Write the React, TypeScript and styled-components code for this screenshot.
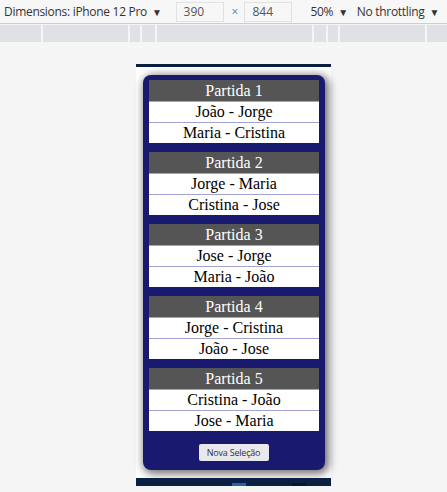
import React from "react";
import styled, { createGlobalStyle } from "styled-components";

const GlobalStyle = createGlobalStyle`
  html, body {
    margin: 0;
    padding: 0;
    background: #f4f5f4;
    width: 447px;
    height: 492px;
    overflow: hidden;
  }
`;

const Screen = styled.div`
  width: 447px;
  height: 492px;
  display: flex;
  flex-direction: column;
  background: #f4f5f4;
  font-family: "Open Sans", "Liberation Sans", sans-serif;
`;

const Toolbar = styled.div`
  height: 23px;
  display: flex;
  align-items: center;
  background: #f7f7f7;
  border-bottom: 1px solid #cbcdd1;
  font-size: 12px;
  color: #333333;
  padding-left: 4px;
`;

const ToolLabel = styled.span<{ $gap?: number }>`
  margin-left: ${(p) => p.$gap ?? 0}px;
  white-space: nowrap;
  letter-spacing: -0.3px;
`;

const Caret = styled.span`
  font-size: 10px;
  margin-left: 5px;
`;

const SizeBox = styled.div<{ $gap: number }>`
  margin-left: ${(p) => p.$gap}px;
  width: 48px;
  height: 20px;
  box-sizing: border-box;
  border: 1px solid #e2e2e2;
  background: #f7f7f7;
  display: flex;
  align-items: center;
  padding-left: 7px;
  color: #555555;
`;

const Times = styled.span`
  color: #777777;
  margin: 0 6px 0 8px;
  font-size: 12px;
`;

const Ruler = styled.div`
  height: 17px;
  margin-top: 1px;
  display: flex;
  background: #dfe1e5;
`;

const RulerSeg = styled.div<{ $w: number }>`
  width: ${(p) => p.$w}px;
  flex-shrink: 0;
  border-right: 2px solid #f4f5f6;
`;

const Stage = styled.div`
  flex: 1;
  display: flex;
  padding-top: 22px;
  padding-left: 136px;
`;

const Viewport = styled.div`
  width: 195px;
  height: 422px;
  background: #ffffff;
  display: flex;
  flex-direction: column;
  border-top: 3px solid #0b1f42;
  box-sizing: border-box;
`;

const Card = styled.div`
  margin: 8px 6px 0 7px;
  height: 395px;
  box-sizing: border-box;
  background: #191970;
  border-radius: 8px;
  padding: 5px 6px 0 6px;
  box-shadow: 2px 2px 8px 2px rgba(0, 0, 0, 0.55);
  display: flex;
  flex-direction: column;
  gap: 9px;
`;

const MatchTable = styled.table`
  width: 100%;
  border-collapse: collapse;
  font-family: "Liberation Serif", "Times New Roman", serif;
  font-size: 16px;
`;

const HeadCell = styled.th`
  background: #555555;
  color: #ffffff;
  font-weight: normal;
  height: 21px;
  padding: 0;
  line-height: 21px;
  text-align: center;
`;

const PairCell = styled.td`
  background: #ffffff;
  color: #000000;
  height: 20px;
  padding: 0;
  line-height: 20px;
  text-align: center;
  border-top: 1px solid #a3a3cf;
`;

const ButtonRow = styled.div`
  display: flex;
  justify-content: center;
  margin-top: 4px;
  padding-right: 1px;
`;

const NewButton = styled.button`
  width: 70px;
  height: 17px;
  border: none;
  border-radius: 2px;
  background: #e9e9ed;
  color: #333333;
  font-family: "Open Sans", "Liberation Sans", sans-serif;
  font-size: 9px;
  letter-spacing: -0.2px;
  padding: 0;
  cursor: pointer;
`;

const Footer = styled.div`
  margin-top: auto;
  height: 8px;
  background: #0b1f42;
  display: flex;
  align-items: flex-end;
`;

const FooterIcon = styled.div<{ $gap: number; $color: string }>`
  margin-left: ${(p) => p.$gap}px;
  width: 14px;
  height: 3px;
  background: ${(p) => p.$color};
`;

const matches = [
  { title: "Partida 1", pairs: ["João - Jorge", "Maria - Cristina"] },
  { title: "Partida 2", pairs: ["Jorge - Maria", "Cristina - Jose"] },
  { title: "Partida 3", pairs: ["Jose - Jorge", "Maria - João"] },
  { title: "Partida 4", pairs: ["Jorge - Cristina", "João - Jose"] },
  { title: "Partida 5", pairs: ["Cristina - João", "Jose - Maria"] },
];

const rulerWidths = [41, 85, 10, 13, 155, 12, 10, 85, 30];

export default function App() {
  return (
    <>
      <GlobalStyle />
      <Screen>
        <Toolbar>
          <ToolLabel>
            Dimensions: iPhone 12 Pro<Caret>▼</Caret>
          </ToolLabel>
          <SizeBox $gap={14}>390</SizeBox>
          <Times>×</Times>
          <SizeBox $gap={0}>844</SizeBox>
          <ToolLabel $gap={18}>
            50%<Caret>▼</Caret>
          </ToolLabel>
          <ToolLabel $gap={9}>
            No throttling<Caret>▼</Caret>
          </ToolLabel>
        </Toolbar>
        <Ruler>
          {rulerWidths.map((w, i) => (
            <RulerSeg key={i} $w={w} />
          ))}
        </Ruler>
        <Stage>
          <Viewport>
            <Card>
              {matches.map((m) => (
                <MatchTable key={m.title}>
                  <thead>
                    <tr>
                      <HeadCell>{m.title}</HeadCell>
                    </tr>
                  </thead>
                  <tbody>
                    {m.pairs.map((p) => (
                      <tr key={p}>
                        <PairCell>{p}</PairCell>
                      </tr>
                    ))}
                  </tbody>
                </MatchTable>
              ))}
              <ButtonRow>
                <NewButton>Nova Seleção</NewButton>
              </ButtonRow>
            </Card>
            <Footer>
              <FooterIcon $gap={96} $color="#2d5fa8" />
              <FooterIcon $gap={46} $color="#06142e" />
            </Footer>
          </Viewport>
        </Stage>
      </Screen>
    </>
  );
}
